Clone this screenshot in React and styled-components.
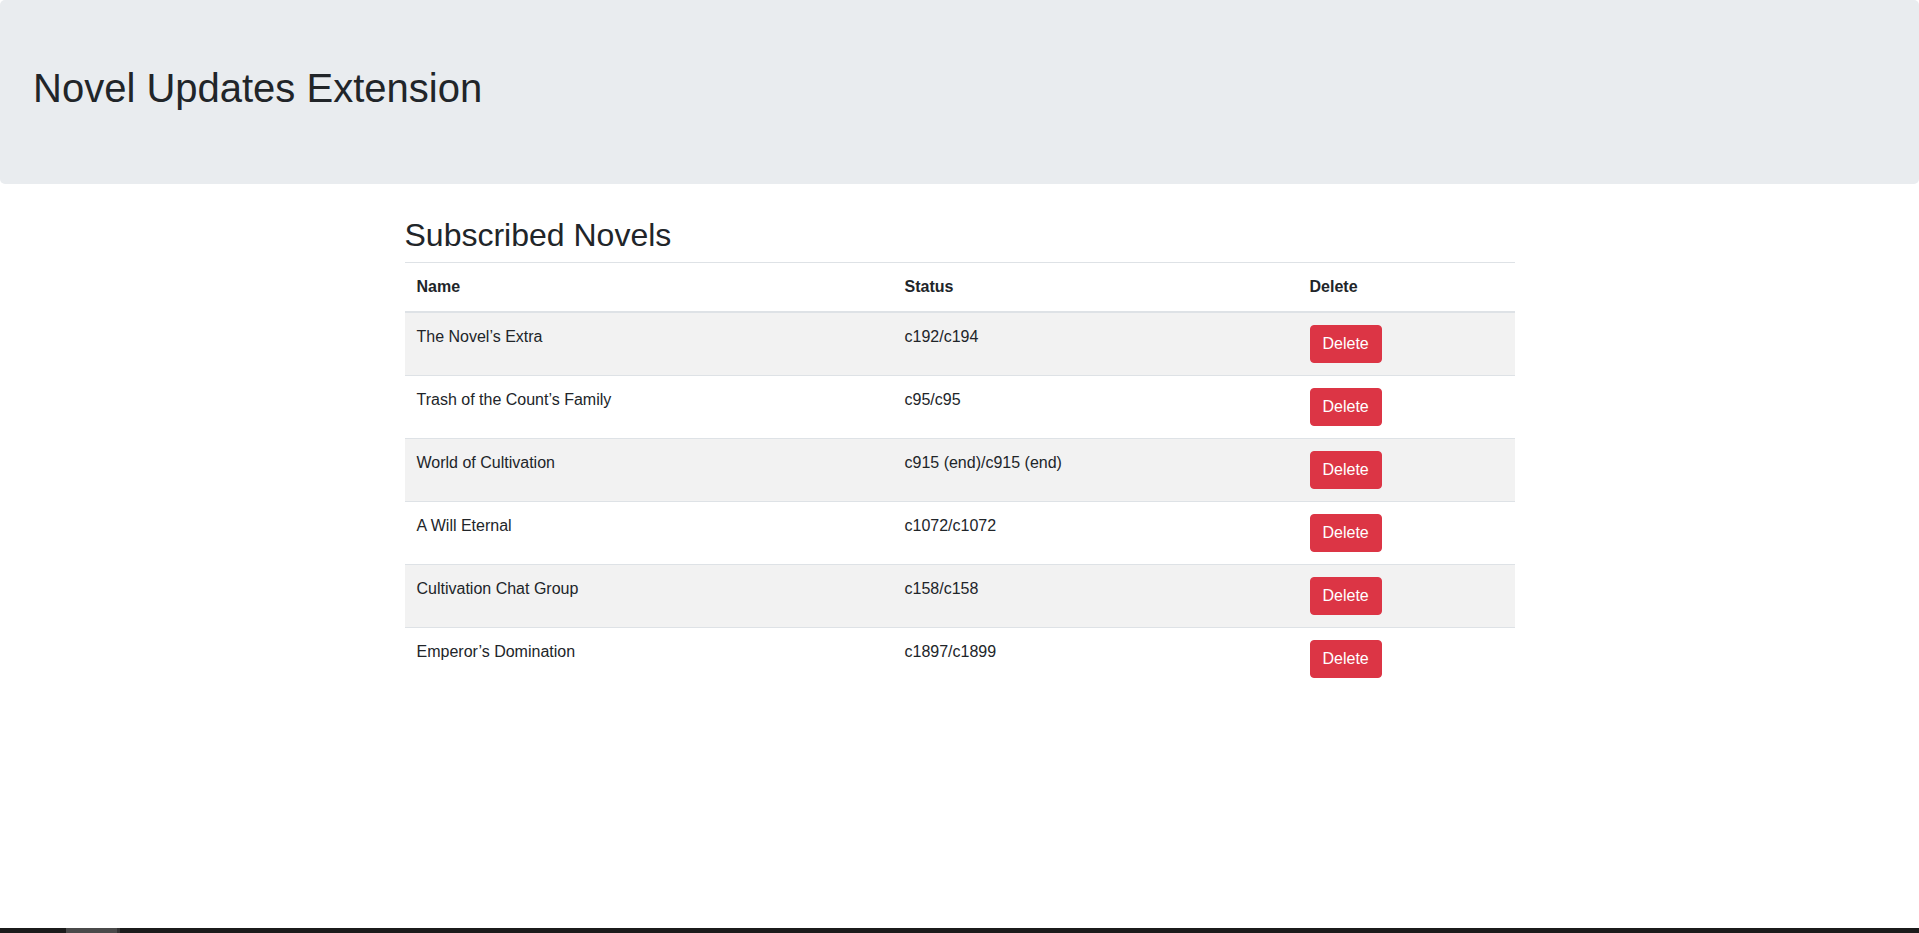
import styled, { createGlobalStyle } from 'styled-components'

const GlobalStyle = createGlobalStyle`
	* {
		box-sizing: border-box;
	}
	body {
		margin: 0;
		font-family: "Liberation Sans", Arial, sans-serif;
		font-size: 16px;
		line-height: 1.5;
		color: #212529;
		background: #fff;
	}
`

const novels = [
	{ name: 'The Novel’s Extra', status: 'c192/c194' },
	{ name: 'Trash of the Count’s Family', status: 'c95/c95' },
	{ name: 'World of Cultivation', status: 'c915 (end)/c915 (end)' },
	{ name: 'A Will Eternal', status: 'c1072/c1072' },
	{ name: 'Cultivation Chat Group', status: 'c158/c158' },
	{ name: 'Emperor’s Domination', status: 'c1897/c1899' },
]

const App = () => {
	return (
		<>
			<GlobalStyle />
			<Jumbotron>
				<Title>Novel Updates Extension</Title>
			</Jumbotron>
			<Container>
				<Heading>Subscribed Novels</Heading>
				<Table>
					<colgroup>
						<col style={{ width: '488px' }} />
						<col style={{ width: '405px' }} />
						<col />
					</colgroup>
					<thead>
						<tr>
							<Th>Name</Th>
							<Th>Status</Th>
							<Th>Delete</Th>
						</tr>
					</thead>
					<tbody>
						{novels.map((n, i) => (
							<Row key={n.name} $striped={i % 2 === 0}>
								<Td>{n.name}</Td>
								<Td>{n.status}</Td>
								<Td>
									<DeleteButton type="button">Delete</DeleteButton>
								</Td>
							</Row>
						))}
					</tbody>
				</Table>
			</Container>
			<ScrollTrack>
				<ScrollThumb />
			</ScrollTrack>
		</>
	)
}
export default App

const Jumbotron = styled.header`
	background-color: #e9ecef;
	height: 184px;
	border-radius: 5px;
	display: flex;
	align-items: center;
	padding: 0 33px;
	margin-bottom: 32px;
`

const Title = styled.h1`
	margin: 0 0 8px;
	font-size: 40px;
	font-weight: 400;
	line-height: 1.2;
`

const Container = styled.main`
	width: 1110px;
	margin: 0 auto;
`

const Heading = styled.h3`
	margin: 0 0 8px;
	font-size: 32px;
	font-weight: 400;
	line-height: 1.2;
`

const Table = styled.table`
	width: 100%;
	border-collapse: collapse;
	table-layout: fixed;
`

const Th = styled.th`
	text-align: left;
	font-weight: 700;
	padding: 12px;
	line-height: 24px;
	vertical-align: bottom;
	border-top: 1px solid #dee2e6;
	border-bottom: 2px solid #dee2e6;
`

const Row = styled.tr`
	background-color: ${(p) => (p.$striped ? '#f2f2f2' : 'transparent')};
`

const Td = styled.td`
	padding: 12px;
	line-height: 24px;
	vertical-align: top;
	border-top: 1px solid #dee2e6;
	tr:first-child > & {
		border-top: none;
	}
`

const DeleteButton = styled.button`
	font-family: inherit;
	font-size: 16px;
	line-height: 1.5;
	color: #fff;
	background-color: #dc3545;
	border: 1px solid #dc3545;
	border-radius: 4px;
	padding: 6px 12px;
	cursor: pointer;
	display: block;
`

const ScrollTrack = styled.div`
	position: fixed;
	left: 0;
	right: 0;
	bottom: 0;
	height: 5px;
	background: #1b1b1b;
`

const ScrollThumb = styled.div`
	position: absolute;
	left: 66px;
	top: 0;
	width: 54px;
	height: 5px;
	background: #4a4a4a;
	border-right: 3px solid #333;
`
